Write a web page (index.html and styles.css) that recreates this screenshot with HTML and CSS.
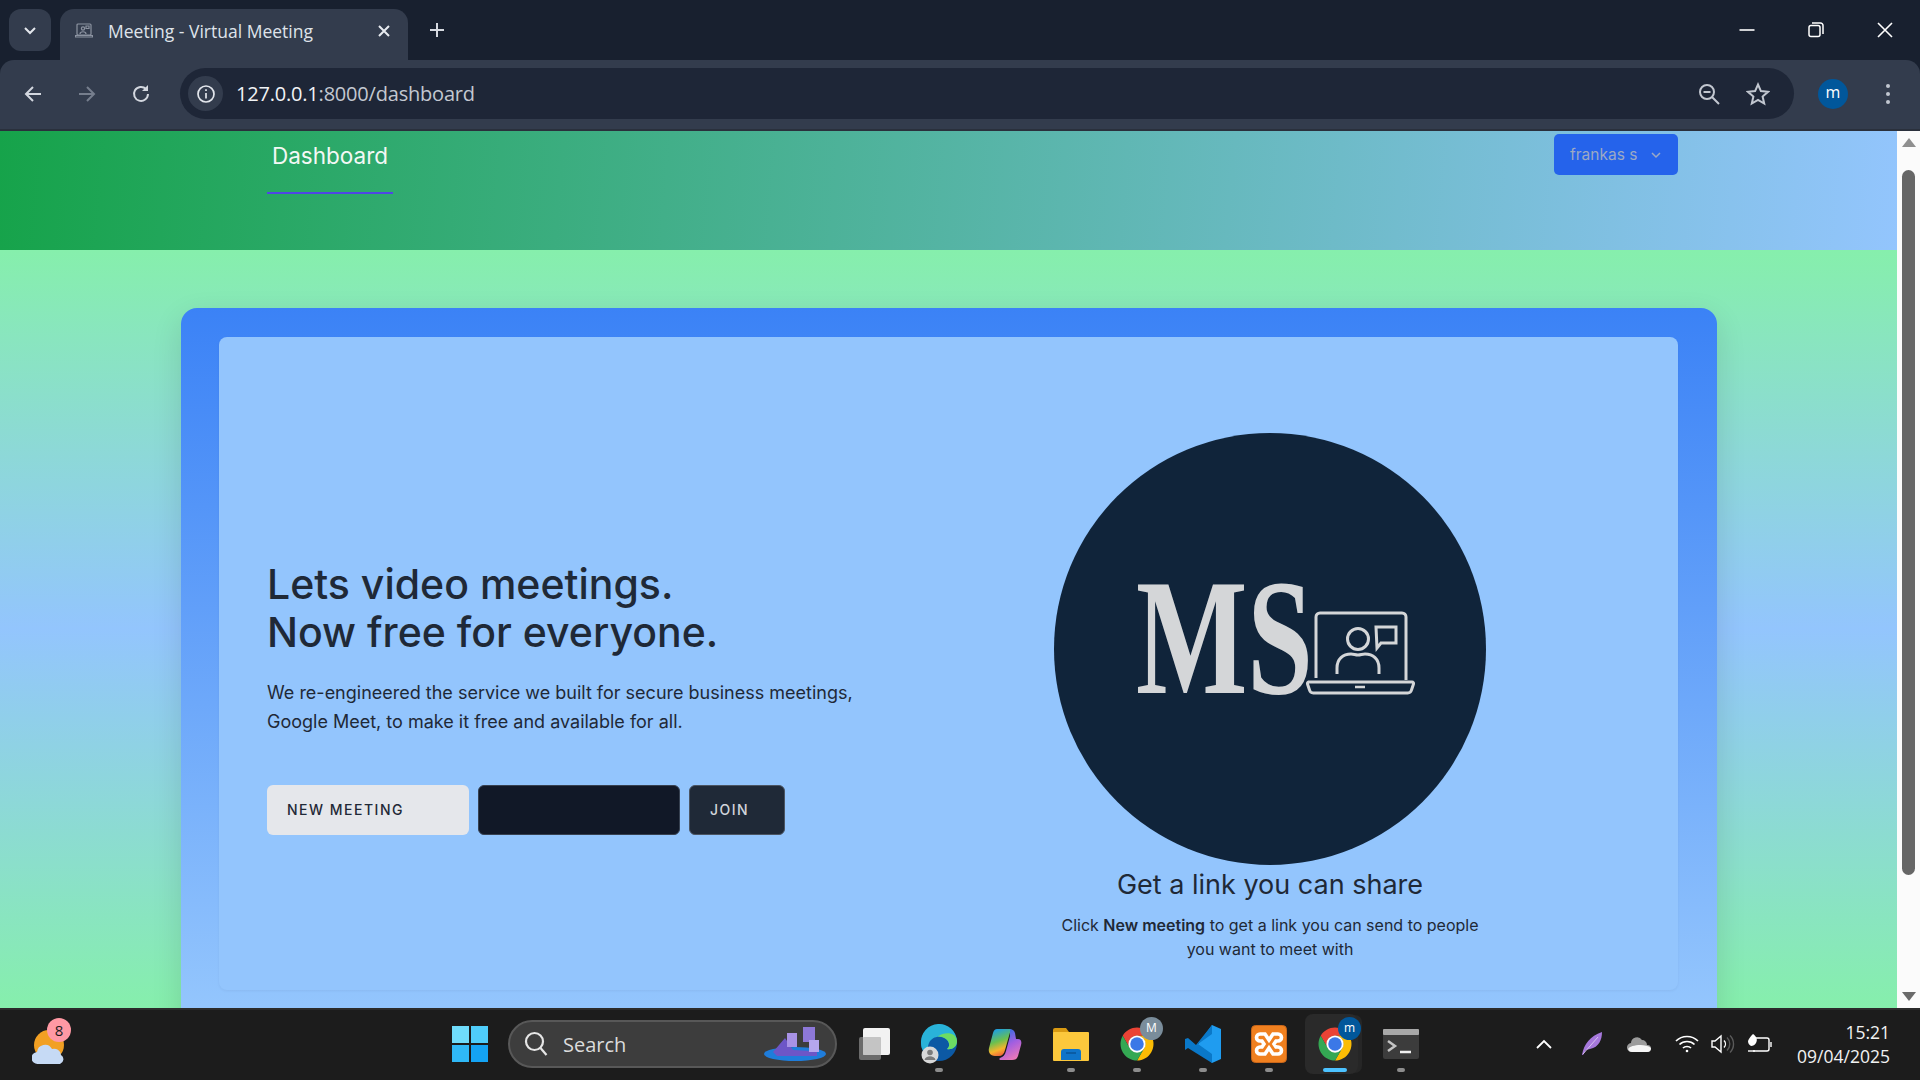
FILE: index.html
```html
<!DOCTYPE html>
<html>
<head>
    <meta charset="UTF-8">
    <title>Meeting - Virtual Meeting</title>
    <link rel="stylesheet" href="styles.css">
</head>
<body>
    <svg class="defs" width="0" height="0">
        <symbol id="chrome" viewBox="0 0 48 48">
            <path fill="#ea4335" d="M43.05 13A22 22 0 0 0 4.95 13L14.47 29.5A11 11 0 0 1 24 13Z"/>
            <path fill="#fbbc04" transform="rotate(120 24 24)" d="M43.05 13A22 22 0 0 0 4.95 13L14.47 29.5A11 11 0 0 1 24 13Z"/>
            <path fill="#34a853" transform="rotate(240 24 24)" d="M43.05 13A22 22 0 0 0 4.95 13L14.47 29.5A11 11 0 0 1 24 13Z"/>
            <circle cx="24" cy="24" r="11.5" fill="#fff"/>
            <circle cx="24" cy="24" r="9" fill="#3b78e7"/>
        </symbol>
    </svg>

    <!-- browser top -->
    <div class="tabstrip">
        <div class="tab-search">
            <svg width="14" height="14" viewBox="0 0 14 14"><path d="M2 5l5 5 5-5" fill="none" stroke="#e3e6ec" stroke-width="2"/></svg>
        </div>
        <div class="tab">
            <svg class="favicon" width="18" height="16" viewBox="0 0 18 16" fill="none" stroke="#8c93a1" stroke-width="1.2">
                <rect x="2" y="1" width="14" height="11" rx="1"/>
                <circle cx="8" cy="5.5" r="1.6"/>
                <path d="M5 11c0-3 6-3 6 0M11 3h3v2.5h-3zM0.5 12.5h17v1.5h-17z"/>
            </svg>
            <span class="tab-title">Meeting - Virtual Meeting</span>
            <svg width="14" height="14" viewBox="0 0 14 14"><path d="M2 2l10 10M12 2L2 12" stroke="#e8ebf0" stroke-width="2"/></svg>
        </div>
        <svg class="new-tab" width="16" height="16" viewBox="0 0 16 16"><path d="M8 1v14M1 8h14" stroke="#d5d9e0" stroke-width="2"/></svg>
        <div class="window-controls">
            <svg width="16" height="16" viewBox="0 0 16 16"><path d="M0.5 8h15" stroke="#fff" stroke-width="1.6"/></svg>
            <svg width="16" height="16" viewBox="0 0 16 16" fill="none" stroke="#fff" stroke-width="1.5"><rect x="1" y="3.5" width="11" height="11" rx="2"/><path d="M4 1h8.5a2.5 2.5 0 0 1 2.5 2.5V12"/></svg>
            <svg width="16" height="16" viewBox="0 0 16 16"><path d="M1 1l14 14M15 1L1 15" stroke="#fff" stroke-width="1.6"/></svg>
        </div>
    </div>
    <div class="toolbar">
        <svg class="nav-icon" width="20" height="20" viewBox="0 0 20 20" fill="none" stroke="#d3d7df" stroke-width="2"><path d="M18 10H3M10 3l-7 7 7 7"/></svg>
        <svg class="nav-icon" width="20" height="20" viewBox="0 0 20 20" fill="none" stroke="#767e8d" stroke-width="2"><path d="M2 10h15M10 3l7 7-7 7"/></svg>
        <svg class="nav-icon" width="20" height="20" viewBox="0 0 20 20" fill="none" stroke="#d3d7df" stroke-width="2"><path d="M17 10a7 7 0 1 1-2-5"/><path d="M17 1v6h-6z" fill="#d3d7df" stroke="none"/></svg>
        <div class="omnibox">
            <div class="site-info">
                <svg width="20" height="20" viewBox="0 0 20 20" fill="none" stroke="#e3e6ec" stroke-width="1.7"><circle cx="10" cy="10" r="8"/><path d="M10 9v5.5M10 5.2v1.8"/></svg>
            </div>
            <span class="url">127.0.0.1<span class="url-path">:8000/dashboard</span></span>
            <svg class="omni-zoom" width="24" height="24" viewBox="0 0 24 24" fill="none" stroke="#c2c7d0" stroke-width="2"><circle cx="10" cy="10" r="7"/><path d="M6.5 10h7M15 15l7 7"/></svg>
            <svg class="omni-star" width="24" height="24" viewBox="0 0 24 24" fill="none" stroke="#c2c7d0" stroke-width="2"><path d="M12 2.5l2.9 6.6 7.1.7-5.4 4.7 1.6 7-6.2-3.7-6.2 3.7 1.6-7L2 9.8l7.1-.7z"/></svg>
        </div>
        <div class="avatar">m</div>
        <div class="menu-dots"><i></i><i></i><i></i></div>
    </div>

    <!-- page -->
    <div class="viewport">
        <div class="page">
            <header class="site-header">
                <nav class="site-nav"><a class="nav-link">Dashboard</a></nav>
                <button class="user-btn">frankas s
                    <svg width="12" height="12" viewBox="0 0 12 12" fill="none" stroke="#9ca9c4" stroke-width="1.5"><path d="M2 4l4 4 4-4"/></svg>
                </button>
            </header>
            <main class="content">
                <div class="outer-card">
                    <div class="inner-card">
                        <section class="hero">
                            <h1>Lets video meetings.<br>Now free for everyone.</h1>
                            <p>We re-engineered the service we built for secure business meetings, Google Meet, to make it free and available for all.</p>
                            <div class="actions">
                                <button class="btn btn-light">New Meeting</button>
                                <input class="code-input" type="text">
                                <button class="btn btn-dark">Join</button>
                            </div>
                        </section>
                        <section class="share">
                            <div class="logo-circle">
                                <svg width="300" height="218" viewBox="0 -40 300 218" fill="none" stroke="#d4d6d8" stroke-width="3">
                                    <text class="logo-text" x="16" y="113" textLength="177" lengthAdjust="spacingAndGlyphs">MS</text>
                                    <path d="M196 98V37a4 4 0 0 1 4-4h82a4 4 0 0 1 4 4v63"/>
                                    <path d="M188 102h104a1.5 1.5 0 0 1 1.5 2l-2 6a4 4 0 0 1-4 3h-94a4 4 0 0 1-4-3l-2-6a1.5 1.5 0 0 1 1.5-2z"/>
                                    <path d="M235 107h10" stroke-width="2.5"/>
                                    <circle cx="238" cy="59" r="10.5"/>
                                    <path d="M217 94v-6c0-9 6-14 14-14 3 0 4 1 7 1s4-1 7-1c8 0 14 5 14 14v6"/>
                                    <path d="M256 47h20v16h-15l-4 5z"/>
                                </svg>
                            </div>
                            <h2>Get a link you can share</h2>
                            <p>Click <strong>New meeting</strong> to get a link you can send to people you want to meet with</p>
                        </section>
                    </div>
                </div>
            </main>
        </div>
        <div class="scrollbar">
            <svg width="14" height="10" viewBox="0 0 14 10"><path d="M7 0l7 9H0z" fill="#8f8f8f"/></svg>
            <div class="scroll-thumb"></div>
            <svg width="14" height="10" viewBox="0 0 14 10"><path d="M7 10L14 1H0z" fill="#6a6a6a"/></svg>
        </div>
    </div>

    <!-- windows taskbar -->
    <footer class="taskbar">
        <div class="weather">
            <svg width="36" height="38" viewBox="0 0 36 38">
                <circle cx="17" cy="17" r="15" fill="#f2a023"/>
                <path d="M6 36a6 6 0 0 1-1-12 8 8 0 0 1 15-3 7 7 0 0 1 9 6 5 5 0 0 1-1 9z" fill="#c6daf5"/>
            </svg>
            <span class="weather-badge">8</span>
        </div>
        <svg class="win-logo" width="36" height="36" viewBox="0 0 36 36">
            <rect width="17" height="17" fill="#6fdcfb"/>
            <rect x="19" width="17" height="17" fill="#4fcdfa"/>
            <rect y="19" width="17" height="17" fill="#2fb8f6"/>
            <rect x="19" y="19" width="17" height="17" fill="#14a3f3"/>
        </svg>
        <div class="search-box">
            <svg width="24" height="26" viewBox="0 0 24 26" fill="none" stroke="#e6e6e6" stroke-width="2.2"><circle cx="10.5" cy="10.5" r="8.5"/><path d="M16.5 17l6 7"/></svg>
            <span>Search</span>
            <svg class="search-art" width="64" height="36" viewBox="0 0 64 36">
                <ellipse cx="32" cy="28" rx="31" ry="7" fill="#1f7ddb"/>
                <path d="M10 26l12-14 8 12 18 1 6-5v10H14z" fill="#6d56c7"/>
                <rect x="24" y="7" width="10" height="14" fill="#a892e6"/>
                <rect x="40" y="1" width="12" height="15" fill="#8d78d8"/>
                <rect x="46" y="14" width="10" height="12" fill="#b5a6ee"/>
            </svg>
        </div>
        <div class="task-icons">
            <div class="task-item">
                <svg class="task-view" width="36" height="36" viewBox="0 0 36 36">
                    <rect x="0" y="11" width="22" height="23" rx="2" fill="#6b6b6b"/>
                    <rect x="4" y="2" width="27" height="27" rx="2" fill="#f2f2f2"/>
                    <rect x="4" y="11" width="18" height="18" rx="1" fill="#c4c4c4"/>
                </svg>
            </div>
            <div class="task-item running">
                <svg width="36" height="40" viewBox="0 0 36 40">
                    <circle cx="18" cy="19" r="18" fill="#0c59a4"/>
                    <path d="M0 19A18 18 0 0 1 36 17c0 6-5 9-10 8 3-2 3-7-1-10-5-4-14-3-17 4-2 4-1 9 2 13C4 30 0 26 0 19z" fill="#29b3d9"/>
                    <path d="M36 17c0 6-5 9-10 8 3-2 3-7-1-10-3-2-6-3-9-2 6-5 19-6 20 4z" fill="#6ddc62"/>
                    <circle cx="9" cy="31" r="8.5" fill="#d8d8d8"/>
                    <circle cx="9" cy="28.5" r="2.8" fill="#7b7b7b"/>
                    <path d="M3.5 36c1-5 10-5 11 0z" fill="#7b7b7b"/>
                </svg>
            </div>
            <div class="task-item">
                <svg width="34" height="34" viewBox="0 0 34 34">
                    <defs>
                        <linearGradient id="copilotA" x1="0.3" y1="0" x2="0.6" y2="1"><stop offset="0" stop-color="#1a9de8"/><stop offset=".45" stop-color="#6bc04f"/><stop offset=".75" stop-color="#f6b42d"/><stop offset="1" stop-color="#ef5a3c"/></linearGradient>
                        <linearGradient id="copilotB" x1="0.3" y1="0" x2="0.7" y2="1"><stop offset="0" stop-color="#2f6ee0"/><stop offset=".5" stop-color="#a45fe0"/><stop offset="1" stop-color="#ef7ab5"/></linearGradient>
                    </defs>
                    <path d="M9 2h14l-6 21c-1 4-3 6-6 6H7C2 29 0 25 1 21L5 6c1-3 2-4 4-4z" fill="url(#copilotA)"/>
                    <path d="M22 2c2 0 4 1 5 4l1 6h2c3 0 4 3 3 6l-3 11c-1 3-3 4-6 4H13c-2 0-2-1-1-2 3-1 5-3 6-7l4-15z" fill="url(#copilotB)"/>
                </svg>
            </div>
            <div class="task-item running">
                <svg width="36" height="34" viewBox="0 0 36 34">
                    <path d="M0 3a2 2 0 0 1 2-2h11l3 4v6H0z" fill="#d99a12"/>
                    <rect y="5" width="36" height="29" rx="1" fill="#fcc83c"/>
                    <path d="M8 33V25a3 3 0 0 1 3-3h14a3 3 0 0 1 3 3v8z" fill="#0f74c9"/>
                    <path d="M13 26h10" stroke="#0a5497" stroke-width="1.5"/>
                </svg>
            </div>
            <div class="task-item running">
                <svg class="chrome-icon" width="36" height="36"><use href="#chrome"/></svg>
                <span class="chrome-badge badge-gray">M</span>
            </div>
            <div class="task-item running">
                <svg width="36" height="38" viewBox="0 0 36 38">
                    <path d="M27 0l9 4v30l-9 4L11 22z" fill="#1f9cf0"/>
                    <path d="M27 9L13 19l14 10V38L3 23 0 25V14l3-1 8 7L27 0z" fill="#0a78c8"/>
                </svg>
            </div>
            <div class="task-item running">
                <svg width="36" height="38" viewBox="0 0 36 38">
                    <rect x="0.5" y="0.5" width="35" height="37" rx="4" fill="#f0801f" stroke="#c9661a"/>
                    <path d="M9 9h5l4 6 4-6h5a3 3 0 0 1 0 7h-2l-2 3 2 3h2a3 3 0 0 1 0 7h-5l-4-6-4 6H9a3 3 0 0 1 0-7h2l2-3-2-3H9a3 3 0 0 1 0-7z" fill="none" stroke="#fff" stroke-width="3.6"/>
                </svg>
            </div>
            <div class="task-item active">
                <svg class="chrome-icon" width="36" height="36"><use href="#chrome"/></svg>
                <span class="chrome-badge badge-blue">m</span>
            </div>
            <div class="task-item running">
                <svg width="36" height="30" viewBox="0 0 36 30">
                    <rect width="36" height="30" rx="2" fill="#3c3c3c"/>
                    <rect width="36" height="6" rx="1" fill="#a8a8a8"/>
                    <path d="M5 12l7 5-7 5" fill="none" stroke="#c4c4c4" stroke-width="2.5"/>
                    <path d="M17 23h11" stroke="#f0f0f0" stroke-width="2.5"/>
                </svg>
            </div>
        </div>
        <div class="tray">
            <svg class="tray-chevron" width="16" height="10" viewBox="0 0 16 10"><path d="M1 9l7-7 7 7" fill="none" stroke="#fff" stroke-width="1.8"/></svg>
            <svg width="22" height="24" viewBox="0 0 22 24"><path d="M1 23C3 12 9 4 21 0c0 8-3 15-12 17l-4 1-3 5z" fill="#a678dc"/><path d="M2 22L17 5" stroke="#e3d4f5" stroke-width=".8"/></svg>
            <svg width="24" height="16" viewBox="0 0 24 16"><path d="M5 16a4.5 4.5 0 0 1-1-9 6 6 0 0 1 11-3 5 5 0 0 1 5 5 3.5 3.5 0 0 1 1 7z" fill="#9b9b9b"/><path d="M1 13c2-4 17-6 23-1 0 2-1 4-4 4H5c-2 0-3-1-4-3z" fill="#f5f5f5"/></svg>
            <svg width="24" height="18" viewBox="0 0 24 18" fill="none" stroke="#fff" stroke-width="1.7"><path d="M1 6c6-6 16-6 22 0M4.5 9.5c4-4 11-4 15 0M8 13c2-2 6-2 8 0"/><circle cx="12" cy="16" r="1.3" fill="#fff" stroke="none"/></svg>
            <svg class="tray-tight" width="24" height="20" viewBox="0 0 24 20" fill="none" stroke="#fff" stroke-width="1.4"><path d="M1 7v6h3l6 5V2L4 7z"/><path d="M13 6.5a5 5 0 0 1 0 7"/><path d="M16 3.5a9 9 0 0 1 0 13M19 1.5a12 12 0 0 1 0 17" stroke="#5a5a5a"/></svg>
            <svg class="tray-tight" width="26" height="20" viewBox="0 0 26 20" fill="none" stroke="#fff" stroke-width="1.4"><path d="M9 4h11a2 2 0 0 1 2 2v9a2 2 0 0 1-2 2H6"/><path d="M24 8v5"/><path d="M6 0c3 2 5 5 3 9-1 2-3 3-5 3-2-1-3-3-3-5 1-3 3-5 5-7z" fill="#fff" stroke="none"/><path d="M1 17h7"/></svg>
            <div class="clock">
                <span>15:21</span>
                <span>09/04/2025</span>
            </div>
        </div>
    </footer>
</body>
</html>
```

FILE: styles.css
```css
* {
    box-sizing: border-box;
}

html, body {
    margin: 0;
    height: 100%;
}

body {
    display: flex;
    flex-direction: column;
    overflow: hidden;
    font-family: "Open Sans", "Noto Sans", sans-serif;
    background: #18202f;
}

.defs {
    position: absolute;
}

/* browser top */
.tabstrip {
    height: 60px;
    flex: none;
    display: flex;
    align-items: flex-start;
    padding: 9px 0 0 9px;
    background: #18202f;
}

.tab-search {
    width: 42px;
    height: 42px;
    border-radius: 12px;
    background: #333c4d;
    display: flex;
    align-items: center;
    justify-content: center;
    margin-right: 9px;
}

.tab {
    width: 348px;
    height: 51px;
    padding: 0 17px 7px 15px;
    background: #333c4d;
    border-radius: 14px 14px 0 0;
    display: flex;
    align-items: center;
    color: #dfe3ea;
}

.favicon {
    margin-right: 15px;
}

.tab-title {
    flex: 1;
    font-size: 17.5px;
}

.new-tab {
    margin: 13px 0 0 21px;
}

.window-controls {
    margin-left: auto;
    margin-top: 13px;
    display: flex;
    gap: 53px;
    padding-right: 27px;
}

.toolbar {
    height: 71px;
    flex: none;
    display: flex;
    align-items: center;
    padding: 0 0 2px 23px;
    background: #333c4d;
    border-radius: 14px 14px 0 0;
    border-bottom: 2px solid #2a303c;
}

.nav-icon {
    margin-right: 34px;
}

.omnibox {
    width: 1614px;
    height: 51px;
    margin-left: -5px;
    padding: 0 24px 0 8px;
    background: #1e2637;
    border-radius: 26px;
    display: flex;
    align-items: center;
}

.site-info {
    width: 35px;
    height: 35px;
    border-radius: 50%;
    background: #333c4d;
    display: flex;
    align-items: center;
    justify-content: center;
    margin-right: 13px;
}

.url {
    flex: 1;
    color: #f1f3f6;
    font-size: 20px;
    letter-spacing: -0.2px;
}

.url-path {
    color: #c3c8d1;
}

.omni-zoom {
    margin-right: 25px;
}

.avatar {
    width: 30px;
    height: 30px;
    margin-left: 24px;
    border-radius: 50%;
    background: #01579b;
    color: #fff;
    font-size: 16px;
    line-height: 27px;
    text-align: center;
}

.menu-dots {
    margin-left: 38px;
    display: flex;
    flex-direction: column;
    gap: 4px;
}

.menu-dots i {
    width: 4px;
    height: 4px;
    border-radius: 50%;
    background: #c2c7d0;
}

/* page */
.viewport {
    flex: 1;
    min-height: 0;
    display: flex;
}

.page {
    flex: 1;
    min-width: 0;
    overflow: hidden;
    display: flex;
    flex-direction: column;
    font-family: "Inter", "Noto Sans", sans-serif;
}

.site-header {
    height: 119px;
    flex: none;
    display: flex;
    align-items: flex-start;
    justify-content: space-between;
    padding: 0 219px 0 267px;
    background: linear-gradient(95deg, #16a34a, #93c5fd);
}

.nav-link {
    display: block;
    width: 126px;
    height: 63px;
    padding-top: 10px;
    border-bottom: 2px solid #4f46e5;
    color: #f3f8f5;
    font-size: 22.5px;
    font-weight: 400;
    line-height: 30px;
    text-align: center;
}

.user-btn {
    width: 124px;
    height: 41px;
    margin-top: 3px;
    padding: 0 0 0 16px;
    display: flex;
    align-items: center;
    gap: 13px;
    border: 0;
    border-radius: 5px;
    background: #2563eb;
    color: #9ca9c4;
    font-family: inherit;
    font-size: 15.5px;
}

.content {
    flex: 1;
    min-height: 0;
    padding: 58px 180px 0 181px;
    background: linear-gradient(to bottom, #86efac, #93c5fd 50%, #86efac);
}

.outer-card {
    height: 740px;
    padding: 29px 39px 0 38px;
    border-radius: 16px;
    background: linear-gradient(to bottom, #3b82f6, #93c5fd 94%);
    box-shadow: 0 10px 30px rgba(0, 0, 0, 0.12);
}

.inner-card {
    height: 653px;
    display: flex;
    padding-right: 148px;
    border-radius: 8px;
    background: #93c5fd;
    box-shadow: 0 1px 3px rgba(0, 0, 0, 0.05);
}

.hero {
    flex: 1;
    padding: 223px 0 0 48px;
    color: #1f2937;
}

.hero h1 {
    margin: 0;
    font-size: 41px;
    font-weight: 500;
    line-height: 48px;
}

.hero p {
    width: 600px;
    margin: 22px 0 0;
    font-size: 18px;
    line-height: 29px;
}

.actions {
    display: flex;
    gap: 9px;
    margin-top: 49px;
}

.btn {
    height: 50px;
    padding: 0 20px 2px;
    border-radius: 6px;
    font-family: inherit;
    font-size: 14px;
    font-weight: 500;
    letter-spacing: 1.5px;
    text-align: left;
    text-transform: uppercase;
}

.btn-light {
    width: 202px;
    border: 0;
    background: #e5e7eb;
    color: #1f2937;
}

.btn-dark {
    width: 96px;
    border: 1px solid #4b5563;
    background: #1f2937;
    color: #d1d5db;
}

.code-input {
    width: 202px;
    height: 50px;
    border: 1px solid #374151;
    border-radius: 6px;
    background: #111827;
}

.share {
    width: 520px;
    padding-top: 96px;
    display: flex;
    flex-direction: column;
    align-items: center;
    text-align: center;
    color: #1f2937;
}

.logo-circle {
    width: 432px;
    height: 432px;
    flex: none;
    border-radius: 50%;
    background: #10243a;
    display: flex;
    align-items: center;
    justify-content: center;
}

.logo-text {
    font-family: "Liberation Serif", serif;
    font-size: 166px;
    font-weight: 700;
    fill: #d4d6d8;
    stroke: none;
}

.share h2 {
    margin: 2px 0 0;
    font-size: 27px;
    font-weight: 400;
    line-height: 36px;
}

.share p {
    width: 440px;
    margin: 10px 0 0;
    font-size: 16px;
    line-height: 24px;
}

.share strong {
    font-weight: 600;
}

.scrollbar {
    width: 23px;
    flex: none;
    display: flex;
    flex-direction: column;
    align-items: center;
    padding-top: 7px;
    background: #fbfbfb;
}

.scroll-thumb {
    width: 13px;
    height: 705px;
    margin: 22px 0 116px;
    border-radius: 7px;
    background: #666;
}

/* windows taskbar */
.taskbar {
    height: 72px;
    flex: none;
    display: flex;
    align-items: center;
    padding-bottom: 2px;
    border-top: 2px solid #2b2b2b;
    background: #1c1c1c;
    color: #f2f2f2;
}

.weather {
    width: 36px;
    height: 44px;
    margin-left: 32px;
    display: flex;
    align-items: flex-end;
    position: relative;
}

.weather-badge {
    position: absolute;
    top: -4px;
    left: 15px;
    width: 24px;
    height: 24px;
    border-radius: 50%;
    background: #ff99a4;
    color: #1c1c1c;
    font-size: 15px;
    line-height: 24px;
    text-align: center;
}

.win-logo {
    margin-left: 384px;
}

.search-box {
    width: 329px;
    height: 48px;
    margin-left: 20px;
    padding: 0 8px 0 14px;
    display: flex;
    align-items: center;
    border: 2px solid #585858;
    border-radius: 24px;
    background: #3d3d3d;
    color: #dcdcdc;
    font-size: 20px;
}

.search-box span {
    margin-left: 15px;
    flex: 1;
}

.task-icons {
    display: flex;
    margin-left: 3px;
}

.task-item {
    width: 66px;
    height: 66px;
    display: flex;
    align-items: center;
    justify-content: center;
    position: relative;
}

.task-item svg {
    position: relative;
}

.task-view {
    margin-left: 8px;
}

.task-item.running::after,
.task-item.active::after {
    content: "";
    position: absolute;
    bottom: 5px;
    left: 29px;
    width: 8px;
    height: 4px;
    border-radius: 2px;
    background: #8c8c8c;
}

.task-item.active::before {
    content: "";
    position: absolute;
    top: 3px;
    left: 3px;
    width: 53px;
    height: 60px;
    border-radius: 8px;
    background: #2a2a2a;
    box-shadow: 5px 0 0 -1px #262626;
}

.task-item.active::after {
    left: 21px;
    width: 24px;
    background: #4cc2ff;
}

.chrome-badge {
    position: absolute;
    top: 6px;
    left: 36px;
    width: 23px;
    height: 23px;
    border-radius: 50%;
    color: #fff;
    font-size: 12px;
    line-height: 22px;
    text-align: center;
}

.badge-gray {
    background: #7a8d9b;
}

.badge-blue {
    background: #01579b;
}

.tray {
    margin-left: auto;
    padding-right: 30px;
    display: flex;
    align-items: center;
    gap: 24px;
}

.tray-chevron {
    margin-right: 5px;
}

.tray-tight {
    margin-left: -12px;
}

.clock {
    display: flex;
    flex-direction: column;
    align-items: flex-end;
    font-size: 17.5px;
    line-height: 24px;
}
```
